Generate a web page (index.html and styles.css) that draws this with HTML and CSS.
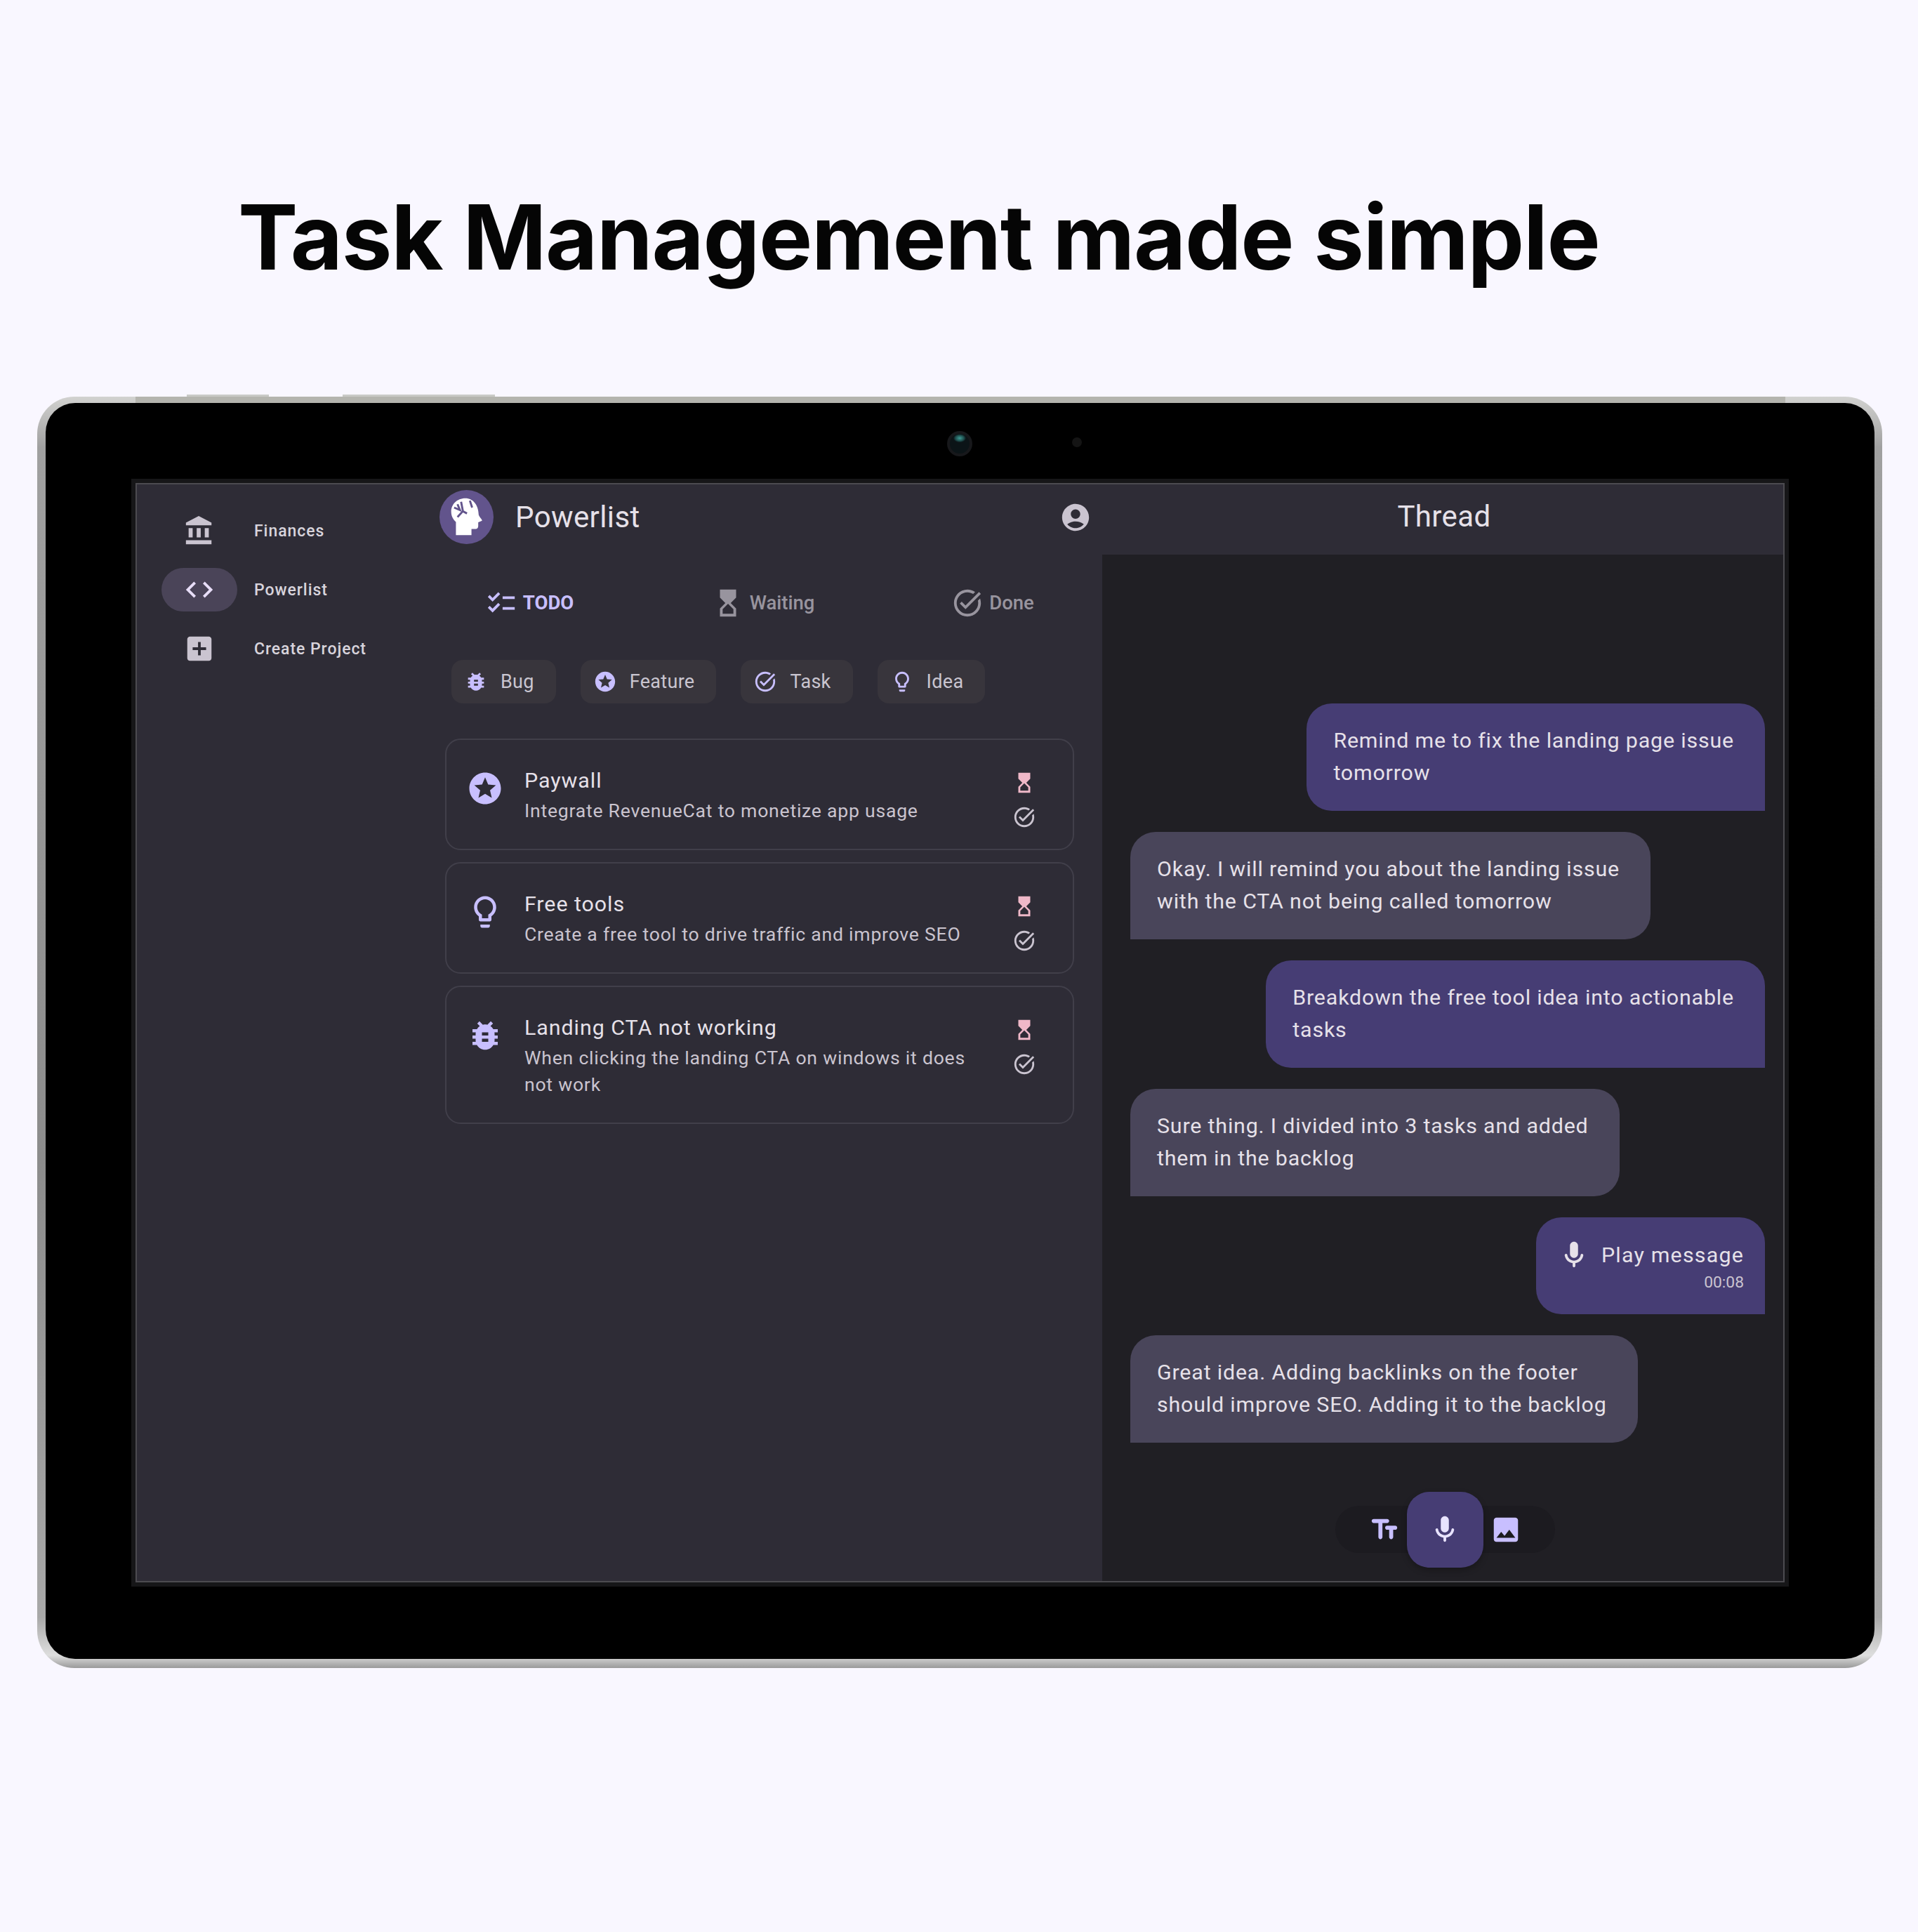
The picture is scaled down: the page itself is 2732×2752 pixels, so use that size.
FILE: index.html
```html
<!DOCTYPE html>
<html lang="en">
<head>
    <meta charset="UTF-8">
    <meta name="viewport" content="width=device-width, initial-scale=1.0">
    <title>Task Management made simple</title>
    <link rel="stylesheet" href="styles.css">
</head>
<body>
    <!-- Material icons, reused below -->
    <svg class="sprite" xmlns="http://www.w3.org/2000/svg">
        <symbol id="i-bank" viewBox="0 0 24 24"><path d="M4 10v7h3v-7H4zm6 0v7h3v-7h-3zM2 22h19v-3H2v3zm14-12v7h3v-7h-3zm-4.500-9L2 6v2h19V6l-9.500-5z"/></symbol>
        <symbol id="i-code" viewBox="0 0 24 24"><path d="M9.400 16.600L4.800 12l4.600-4.600L8 6l-6 6 6 6 1.400-1.400zm5.200 0l4.600-4.600-4.600-4.600L16 6l6 6-6 6-1.400-1.400z"/></symbol>
        <symbol id="i-add" viewBox="0 0 24 24"><path d="M19 3H5c-1.110 0-2 .9-2 2v14c0 1.100.89 2 2 2h14c1.100 0 2-.9 2-2V5c0-1.100-.9-2-2-2zm-2 10h-4v4h-2v-4H7v-2h4V7h2v4h4v2z"/></symbol>
        <symbol id="i-list" viewBox="0 0 24 24"><path d="M22 7h-9v2h9V7zm0 8h-9v2h9v-2zM5.540 11L2 7.460l1.410-1.410 2.120 2.120 4.240-4.240 1.410 1.410L5.540 11zm0 8L2 15.460l1.410-1.410 2.120 2.120 4.240-4.240 1.410 1.410L5.540 19z"/></symbol>
        <symbol id="i-hourglass" viewBox="0 0 24 24"><path d="M6 2l.01 6L10 12l-3.990 4.010L6 22h12v-6l-4-4 4-3.990V2H6zm10 14.500V20H8v-3.500l4-4 4 4z"/></symbol>
        <symbol id="i-task" viewBox="0 0 24 24"><path d="M22 5.180L10.590 16.600l-4.240-4.240 1.410-1.410 2.830 2.830 10-10L22 5.180zm-2.210 5.040c.13.57.21 1.170.21 1.780 0 4.420-3.580 8-8 8s-8-3.580-8-8 3.580-8 8-8c1.580 0 3.040.46 4.280 1.250l1.440-1.440C16.100 2.670 14.130 2 12 2 6.480 2 2 6.480 2 12s4.480 10 10 10 10-4.480 10-10c0-1.190-.22-2.330-.6-3.390l-1.610 1.610z"/></symbol>
        <symbol id="i-bug" viewBox="0 0 24 24"><path d="M20 8h-2.810c-.45-.78-1.070-1.450-1.820-1.960L17 4.410 15.590 3l-2.170 2.170C12.960 5.060 12.490 5 12 5c-.49 0-.96.06-1.410.17L8.410 3 7 4.410l1.620 1.630C7.880 6.550 7.260 7.220 6.810 8H4v2h2.090c-.05.33-.09.66-.09 1v1H4v2h2v1c0 .34.04.67.09 1H4v2h2.810c1.040 1.790 2.970 3 5.190 3s4.150-1.210 5.190-3H20v-2h-2.090c.05-.33.09-.66.09-1v-1h2v-2h-2v-1c0-.34-.04-.67-.09-1H20V8zm-6 8h-4v-2h4v2zm0-4h-4v-2h4v2z"/></symbol>
        <symbol id="i-star" viewBox="0 0 24 24"><path d="M11.990 2C6.470 2 2 6.480 2 12s4.470 10 9.990 10C17.520 22 22 17.520 22 12S17.520 2 11.990 2zm4.240 16L12 15.450 7.770 18l1.120-4.810-3.730-3.230 4.920-.42L12 5l1.920 4.530 4.920.42-3.730 3.230L16.230 18z"/></symbol>
        <symbol id="i-bulb" viewBox="0 0 24 24"><path d="M9 21c0 .55.45 1 1 1h4c.55 0 1-.45 1-1v-1H9v1zm3-19C8.140 2 5 5.140 5 9c0 2.380 1.190 4.470 3 5.740V17c0 .55.45 1 1 1h6c.55 0 1-.45 1-1v-2.260c1.810-1.270 3-3.360 3-5.740 0-3.860-3.140-7-7-7zm2.850 11.100l-.85.6V16h-4v-2.300l-.85-.6C7.800 12.160 7 10.630 7 9c0-2.760 2.240-5 5-5s5 2.240 5 5c0 1.630-.8 3.160-2.150 4.100z"/></symbol>
        <symbol id="i-account" viewBox="0 0 24 24"><path d="M12 2C6.480 2 2 6.480 2 12s4.480 10 10 10 10-4.480 10-10S17.520 2 12 2zm0 4c1.930 0 3.500 1.570 3.500 3.500S13.930 13 12 13s-3.500-1.570-3.500-3.500S10.070 6 12 6zm0 14c-2.030 0-4.430-.82-6.140-2.880C7.550 15.800 9.680 15 12 15s4.450.8 6.140 2.120C16.430 19.180 14.030 20 12 20z"/></symbol>
        <symbol id="i-mic" viewBox="0 0 24 24"><path d="M12 14c1.660 0 3-1.340 3-3V5c0-1.660-1.340-3-3-3S9 3.340 9 5v6c0 1.660 1.340 3 3 3zm5.910-3c-.49 0-.9.36-.98.85C16.520 14.200 14.470 16 12 16s-4.520-1.800-4.930-4.150c-.08-.49-.49-.85-.98-.85-.61 0-1.090.54-1 1.140.49 3 2.890 5.350 5.910 5.780V20c0 .55.45 1 1 1s1-.45 1-1v-2.080c3.020-.43 5.420-2.780 5.910-5.780.1-.6-.39-1.140-1-1.140z"/></symbol>
        <symbol id="i-text" viewBox="0 0 24 24"><path d="M2.500 5.500C2.500 6.330 3.170 7 4 7h3.500v10.500c0 .83.67 1.500 1.500 1.500s1.500-.67 1.500-1.500V7H14c.83 0 1.500-.67 1.500-1.500S14.830 4 14 4H4c-.83 0-1.500.67-1.500 1.500zM20 9h-6c-.83 0-1.500.67-1.500 1.500S13.170 12 14 12h1.500v5.500c0 .83.67 1.500 1.500 1.500s1.500-.67 1.500-1.500V12H20c.83 0 1.500-.67 1.500-1.500S20.830 9 20 9z"/></symbol>
        <symbol id="i-image" viewBox="0 0 24 24"><path d="M21 19V5c0-1.100-.9-2-2-2H5c-1.100 0-2 .9-2 2v14c0 1.100.9 2 2 2h14c1.100 0 2-.9 2-2zM8.500 13.500l2.500 3.010L14.500 12l4.500 6H5l3.500-4.500z"/></symbol>
    </svg>

    <h1 class="headline">Task Management made simple</h1>

    <div class="device">
        <div class="edge-strip"></div>
        <div class="side-button button-one"></div>
        <div class="side-button button-two"></div>
        <div class="bezel">
            <div class="camera"></div>
            <div class="sensor"></div>
            <div class="screen">
                <div class="app">

                    <!-- Nav rail -->
                    <nav class="rail">
                        <div class="rail-item">
                            <span class="rail-pill"><svg class="icon"><use href="#i-bank"/></svg></span>
                            <span class="rail-label">Finances</span>
                        </div>
                        <div class="rail-item">
                            <span class="rail-pill selected"><svg class="icon"><use href="#i-code"/></svg></span>
                            <span class="rail-label">Powerlist</span>
                        </div>
                        <div class="rail-item">
                            <span class="rail-pill"><svg class="icon"><use href="#i-add"/></svg></span>
                            <span class="rail-label">Create Project</span>
                        </div>
                    </nav>

                    <!-- Task list -->
                    <section class="tasks">
                        <header class="tasks-header">
                            <span class="logo">
                                <svg viewBox="0 0 24 24">
                                    <path class="logo-head" d="M11.500 3.700C7.700 3.700 5.200 6.500 5.200 9.600c0 2 .8 3.400 2.100 4.600V20h6.900v-2.700H16c.8 0 1.200-.5 1.200-1.300v-1.700l1.700-.7c.1-.4-1.300-1.800-1.500-2.600-.1-4.200-2.400-7.300-5.900-7.300z"/>
                                    <path class="logo-brain" d="M6.500 7.800l2.600 1.100L8 6.300M9.600 5.200l.8 4.200L8 12M10.400 9.400l1.800 1M13.500 4.700l1 3.100"/>
                                </svg>
                            </span>
                            <span class="app-title">Powerlist</span>
                            <svg class="icon account"><use href="#i-account"/></svg>
                        </header>

                        <div class="tabs">
                            <div class="tab active"><svg class="icon"><use href="#i-list"/></svg>TODO</div>
                            <div class="tab"><svg class="icon"><use href="#i-hourglass"/></svg>Waiting</div>
                            <div class="tab"><svg class="icon"><use href="#i-task"/></svg>Done</div>
                        </div>

                        <div class="chips">
                            <div class="chip"><svg class="chip-icon"><use href="#i-bug"/></svg>Bug</div>
                            <div class="chip"><svg class="chip-icon"><use href="#i-star"/></svg>Feature</div>
                            <div class="chip"><svg class="chip-icon"><use href="#i-task"/></svg>Task</div>
                            <div class="chip"><svg class="chip-icon"><use href="#i-bulb"/></svg>Idea</div>
                        </div>

                        <div class="cards">
                            <article class="card">
                                <svg class="card-icon"><use href="#i-star"/></svg>
                                <div class="card-text">
                                    <h2>Paywall</h2>
                                    <p>Integrate RevenueCat to monetize app usage</p>
                                </div>
                                <div class="card-actions">
                                    <svg class="wait"><use href="#i-hourglass"/></svg>
                                    <svg class="finish"><use href="#i-task"/></svg>
                                </div>
                            </article>
                            <article class="card">
                                <svg class="card-icon"><use href="#i-bulb"/></svg>
                                <div class="card-text">
                                    <h2>Free tools</h2>
                                    <p>Create a free tool to drive traffic and improve SEO</p>
                                </div>
                                <div class="card-actions">
                                    <svg class="wait"><use href="#i-hourglass"/></svg>
                                    <svg class="finish"><use href="#i-task"/></svg>
                                </div>
                            </article>
                            <article class="card">
                                <svg class="card-icon"><use href="#i-bug"/></svg>
                                <div class="card-text">
                                    <h2>Landing CTA not working</h2>
                                    <p>When clicking the landing CTA on windows it does not work</p>
                                </div>
                                <div class="card-actions">
                                    <svg class="wait"><use href="#i-hourglass"/></svg>
                                    <svg class="finish"><use href="#i-task"/></svg>
                                </div>
                            </article>
                        </div>
                    </section>

                    <!-- Thread -->
                    <section class="thread">
                        <header class="thread-header">Thread</header>
                        <div class="thread-body">
                            <div class="messages">
                                <div class="bubble mine">Remind me to fix the landing page issue<br>tomorrow</div>
                                <div class="bubble theirs">Okay. I will remind you about the landing issue<br>with the CTA not being called tomorrow</div>
                                <div class="bubble mine">Breakdown the free tool idea into actionable<br>tasks</div>
                                <div class="bubble theirs">Sure thing. I divided into 3 tasks and added<br>them in the backlog</div>
                                <div class="voice">
                                    <svg class="icon"><use href="#i-mic"/></svg>
                                    <div class="voice-text">
                                        <span class="voice-title">Play message</span>
                                        <span class="voice-time">00:08</span>
                                    </div>
                                </div>
                                <div class="bubble theirs">Great idea. Adding backlinks on the footer<br>should improve SEO. Adding it to the backlog</div>
                            </div>
                            <div class="composer">
                                <svg class="icon"><use href="#i-text"/></svg>
                                <div class="fab"><svg class="icon"><use href="#i-mic"/></svg></div>
                                <svg class="icon"><use href="#i-image"/></svg>
                            </div>
                        </div>
                    </section>

                </div>
            </div>
        </div>
    </div>
</body>
</html>
```

FILE: styles.css
```css
body {
    margin: 0;
    height: 2752px;
    background-color: #f9f7ff;
    font-family: 'Roboto', sans-serif;
    overflow: hidden;
}

.sprite {
    display: none;
}

.headline {
    margin: 0;
    padding: 258px 0 0 339px;
    height: 160px;
    font-family: 'Inter', sans-serif;
    font-size: 128px;
    line-height: 160px;
    font-weight: 700;
    letter-spacing: -1.3px;
    color: #050505;
    white-space: nowrap;
}

/* Tablet frame */
.device {
    position: relative;
    box-sizing: border-box;
    margin: 147px 0 0 53px;
    width: 2628px;
    height: 1811px;
    padding: 9px 11px 13px 12px;
    border-radius: 53px;
    background: linear-gradient(to bottom, #d2d2d0 0, #a0a0a0 4%, #8c8c8c 60%, #a8a8a8 96%, #dedede 99%, #9a9a9a 100%);
}

.edge-strip {
    position: absolute;
    top: 0;
    left: 140px;
    right: 138px;
    height: 9px;
    background-color: #b4b4ae;
}

.side-button {
    position: absolute;
    top: -3px;
    height: 3px;
    background-color: #c9c9c6;
}

.button-one {
    left: 213px;
    width: 117px;
}

.button-two {
    left: 435px;
    width: 217px;
}

.bezel {
    position: relative;
    box-sizing: border-box;
    height: 100%;
    padding: 108px 122px 103px;
    border-radius: 42px;
    background-color: #000;
}

.camera {
    position: absolute;
    top: 40px;
    left: 1284px;
    width: 36px;
    height: 36px;
    box-sizing: border-box;
    border: 4px solid #17181b;
    border-radius: 50%;
    background: radial-gradient(ellipse 9px 6px at 50% 22%, #3f9c95 0, #1d4a4a 70%, transparent 100%), #0b1417;
}

.sensor {
    position: absolute;
    top: 49px;
    left: 1462px;
    width: 14px;
    height: 14px;
    border-radius: 50%;
    background-color: #141414;
}

.screen {
    border: 6px solid #161618;
}

.app {
    box-sizing: border-box;
    display: flex;
    height: 1566px;
    border: 2px solid #4c4b50;
    background-color: #2e2c36;
}

.icon {
    flex: none;
    width: 46px;
    height: 46px;
    fill: currentColor;
}

/* Nav rail */
.rail {
    flex: none;
    box-sizing: border-box;
    width: 415px;
    padding: 24px 0 0 35px;
}

.rail-item {
    display: flex;
    align-items: center;
    gap: 24px;
    height: 84px;
    color: #cac4d0;
}

.rail-pill {
    display: flex;
    align-items: center;
    justify-content: center;
    width: 108px;
    height: 62px;
    border-radius: 31px;
}

.rail-pill.selected {
    background-color: #4a4458;
    color: #e8def8;
}

.rail-label {
    font-size: 23px;
    font-weight: 500;
    letter-spacing: 0.95px;
    color: #d8d4dc;
}

/* Task list */
.tasks {
    flex: 1;
    min-width: 0;
}

.tasks-header {
    display: flex;
    align-items: center;
    box-sizing: border-box;
    height: 100px;
    padding: 0 15px 7px 16px;
}

.logo {
    flex: none;
    display: flex;
    width: 77px;
    height: 77px;
    border-radius: 50%;
    background-color: #62548c;
}

.logo-head {
    fill: #fff;
}

.logo-brain {
    fill: none;
    stroke: #62548c;
    stroke-width: 0.9;
}

.app-title {
    flex: 1;
    margin-left: 31px;
    font-size: 42px;
    letter-spacing: 0.4px;
    color: #e6e1e9;
}

.account {
    color: #cac4d0;
}

.tabs {
    display: grid;
    grid-template-columns: 288px 378px 276px;
    height: 137px;
}

.tab {
    display: flex;
    align-items: center;
    justify-content: center;
    gap: 8px;
    font-size: 27.5px;
    font-weight: 500;
    color: #98949e;
}

.tab.active {
    font-weight: 700;
    color: #c8bfff;
}

.chips {
    display: flex;
    gap: 35px;
    margin: 13px 0 0 33px;
}

.chip {
    display: flex;
    align-items: center;
    gap: 18px;
    height: 62px;
    padding: 0 31px 0 18px;
    border-radius: 16px;
    background-color: #38353c;
    font-size: 27px;
    letter-spacing: 0.3px;
    color: #c9c5d0;
}

.chip-icon {
    width: 34px;
    height: 34px;
    fill: #c8bfff;
}

.cards {
    display: flex;
    flex-direction: column;
    gap: 17px;
    margin: 50px 40px 0 24px;
}

.card {
    display: flex;
    align-items: flex-start;
    padding: 36px 52px 28px 28px;
    border: 2px solid #413f4a;
    border-radius: 22px;
}

.card-icon {
    flex: none;
    width: 54px;
    height: 54px;
    margin-top: 6px;
    fill: #c8bfff;
}

.card-text {
    flex: 1;
    min-width: 0;
    margin: 0 40px 7px 29px;
}

.card-text h2 {
    margin: 0 0 2px;
    font-size: 30.4px;
    line-height: 44px;
    font-weight: 400;
    letter-spacing: 0.95px;
    color: #e6e1e9;
}

.card-text p {
    margin: 0;
    font-size: 26.6px;
    line-height: 38px;
    letter-spacing: 0.76px;
    color: #cac4cf;
}

.card-actions {
    flex: none;
    display: flex;
    flex-direction: column;
    gap: 15px;
    margin-top: 8px;
}

.card-actions svg {
    display: block;
    width: 34px;
    height: 34px;
}

.wait {
    fill: #efb8c8;
}

.finish {
    fill: #cac4d0;
}

/* Thread */
.thread {
    flex: none;
    width: 970px;
    display: flex;
    flex-direction: column;
}

.thread-header {
    display: flex;
    align-items: center;
    justify-content: center;
    box-sizing: border-box;
    height: 100px;
    padding: 0 0 10px 4px;
    font-size: 42px;
    letter-spacing: 0.4px;
    color: #e6e1e9;
}

.thread-body {
    flex: 1;
    display: flex;
    flex-direction: column;
    background-color: #201f24;
}

.messages {
    display: flex;
    flex-direction: column;
    gap: 30px;
    padding: 212px 26px 0 40px;
}

.bubble {
    width: fit-content;
    padding: 30px 44px 31px 38px;
    font-size: 30.4px;
    line-height: 46px;
    letter-spacing: 0.82px;
    color: #e6e1e9;
    white-space: nowrap;
}

.mine,
.voice {
    align-self: flex-end;
    border-radius: 36px 36px 0 36px;
    background-color: #463d74;
}

.theirs {
    align-self: flex-start;
    border-radius: 36px 36px 36px 0;
    background-color: #49455a;
}

.voice {
    display: flex;
    gap: 16px;
    box-sizing: border-box;
    height: 138px;
    padding: 31px 30px 0 31px;
    color: #e6e1e9;
}

.voice-text {
    display: flex;
    flex-direction: column;
    align-items: flex-end;
}

.voice-title {
    font-size: 30.4px;
    line-height: 46px;
    letter-spacing: 1.2px;
}

.voice-time {
    font-size: 22.8px;
    line-height: 32px;
    color: #cac4d0;
}

.composer {
    align-self: center;
    display: flex;
    align-items: center;
    justify-content: center;
    gap: 9px;
    box-sizing: border-box;
    width: 313px;
    height: 67px;
    margin: auto 0 40px 6px;
    border-radius: 34px;
    background-color: #1c1b20;
    color: #c8bfff;
}

.fab {
    display: flex;
    align-items: center;
    justify-content: center;
    width: 109px;
    height: 108px;
    flex: none;
    border-radius: 32px;
    background-color: #463d74;
    color: #e8e3ff;
    box-shadow: 0 4px 8px rgba(0, 0, 0, 0.25);
}
```
